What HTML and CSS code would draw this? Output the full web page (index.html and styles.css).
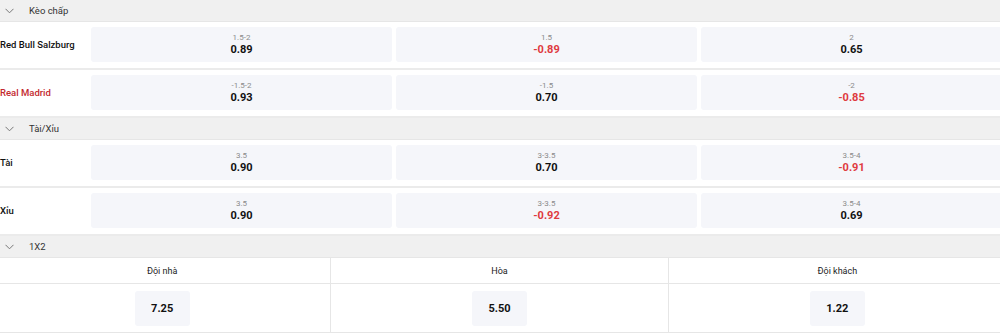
FILE: index.html
```html
<!DOCTYPE html>
<html lang="vi">
<head>
<meta charset="utf-8">
<link rel="stylesheet" href="styles.css">
</head>
<body>
<div class="market">
  <div class="mhead">
    <svg class="chev" width="9" height="6" viewBox="0 0 9 6"><polyline points="0.5,0.8 4.5,4.8 8.5,0.8" fill="none" stroke="#777" stroke-width="1"/></svg>
    <span>Kèo chấp</span>
  </div>
  <div class="orow">
    <div class="team">Red Bull Salzburg</div>
    <div class="odd"><span class="line">1.5-2</span><span class="val">0.89</span></div>
    <div class="odd"><span class="line">1.5</span><span class="val neg">-0.89</span></div>
    <div class="odd"><span class="line">2</span><span class="val">0.65</span></div>
  </div>
  <div class="orow">
    <div class="team away">Real Madrid</div>
    <div class="odd"><span class="line">-1.5-2</span><span class="val">0.93</span></div>
    <div class="odd"><span class="line">-1.5</span><span class="val">0.70</span></div>
    <div class="odd"><span class="line">-2</span><span class="val neg">-0.85</span></div>
  </div>
</div>
<div class="market">
  <div class="mhead">
    <svg class="chev" width="9" height="6" viewBox="0 0 9 6"><polyline points="0.5,0.8 4.5,4.8 8.5,0.8" fill="none" stroke="#777" stroke-width="1"/></svg>
    <span>Tài/Xỉu</span>
  </div>
  <div class="orow">
    <div class="team">Tài</div>
    <div class="odd"><span class="line">3.5</span><span class="val">0.90</span></div>
    <div class="odd"><span class="line">3-3.5</span><span class="val">0.70</span></div>
    <div class="odd"><span class="line">3.5-4</span><span class="val neg">-0.91</span></div>
  </div>
  <div class="orow">
    <div class="team">Xỉu</div>
    <div class="odd"><span class="line">3.5</span><span class="val">0.90</span></div>
    <div class="odd"><span class="line">3-3.5</span><span class="val neg">-0.92</span></div>
    <div class="odd"><span class="line">3.5-4</span><span class="val">0.69</span></div>
  </div>
</div>
<div class="market">
  <div class="mhead">
    <svg class="chev" width="9" height="6" viewBox="0 0 9 6"><polyline points="0.5,0.8 4.5,4.8 8.5,0.8" fill="none" stroke="#777" stroke-width="1"/></svg>
    <span>1X2</span>
  </div>
  <div class="x2">
    <div class="x2h">Đội nhà</div>
    <div class="x2h">Hòa</div>
    <div class="x2h">Đội khách</div>
    <div class="x2c"><div class="xbox">7.25</div></div>
    <div class="x2c"><div class="xbox">5.50</div></div>
    <div class="x2c"><div class="xbox">1.22</div></div>
  </div>
</div>
</body>
</html>
```
FILE: styles.css
```css
html, body {
  margin: 0;
  padding: 0;
  background: #fff;
  overflow: hidden;
}
body {
  width: 1000px;
  font-family: Roboto, "Noto Sans", sans-serif;
  color: #1a1a1a;
}
.mhead {
  height: 22px;
  box-sizing: border-box;
  background: #f0f0f0;
  border-bottom: 1px solid #e6e6e6;
  display: flex;
  align-items: center;
  padding-left: 5px;
  font-size: 9.5px;
  color: #333;
}
.chev {
  margin-right: 15px;
  margin-top: 1px;
}
.orow {
  display: grid;
  grid-template-columns: 87px repeat(3, 301px);
  column-gap: 4px;
  padding: 5px 0 6px;
  border-bottom: 2px solid #ebebeb;
  align-items: center;
}
.team {
  font-size: 9.5px;
  font-weight: 500;
  color: #111;
  white-space: nowrap;
}
.team.away {
  color: #c3292e;
}
.odd {
  height: 35px;
  background: #f5f6fa;
  border-radius: 3px;
  display: flex;
  flex-direction: column;
  align-items: center;
  justify-content: center;
}
.line {
  font-size: 8px;
  color: #8a8a8a;
  line-height: 10px;
}
.val {
  font-size: 11px;
  font-weight: 700;
  color: #111;
  line-height: 13px;
}
.val.neg {
  color: #df3a40;
}
.x2 {
  margin: 0 -6px;
  display: grid;
  grid-template-columns: repeat(3, 1fr);
}
.x2h {
  height: 26px;
  box-sizing: border-box;
  display: flex;
  align-items: center;
  justify-content: center;
  font-size: 9px;
  color: #222;
  border-bottom: 1px solid #e6e6e6;
  border-right: 1px solid #e6e6e6;
}
.x2c {
  height: 49px;
  box-sizing: border-box;
  display: flex;
  align-items: center;
  justify-content: center;
  border-bottom: 1px solid #e6e6e6;
  border-right: 1px solid #e6e6e6;
}
.x2h:nth-child(3), .x2c:nth-child(6) {
  border-right: none;
}
.xbox {
  width: 55px;
  height: 35px;
  background: #f5f6fa;
  border-radius: 3px;
  display: flex;
  align-items: center;
  justify-content: center;
  font-size: 11px;
  font-weight: 700;
  color: #111;
}
```
